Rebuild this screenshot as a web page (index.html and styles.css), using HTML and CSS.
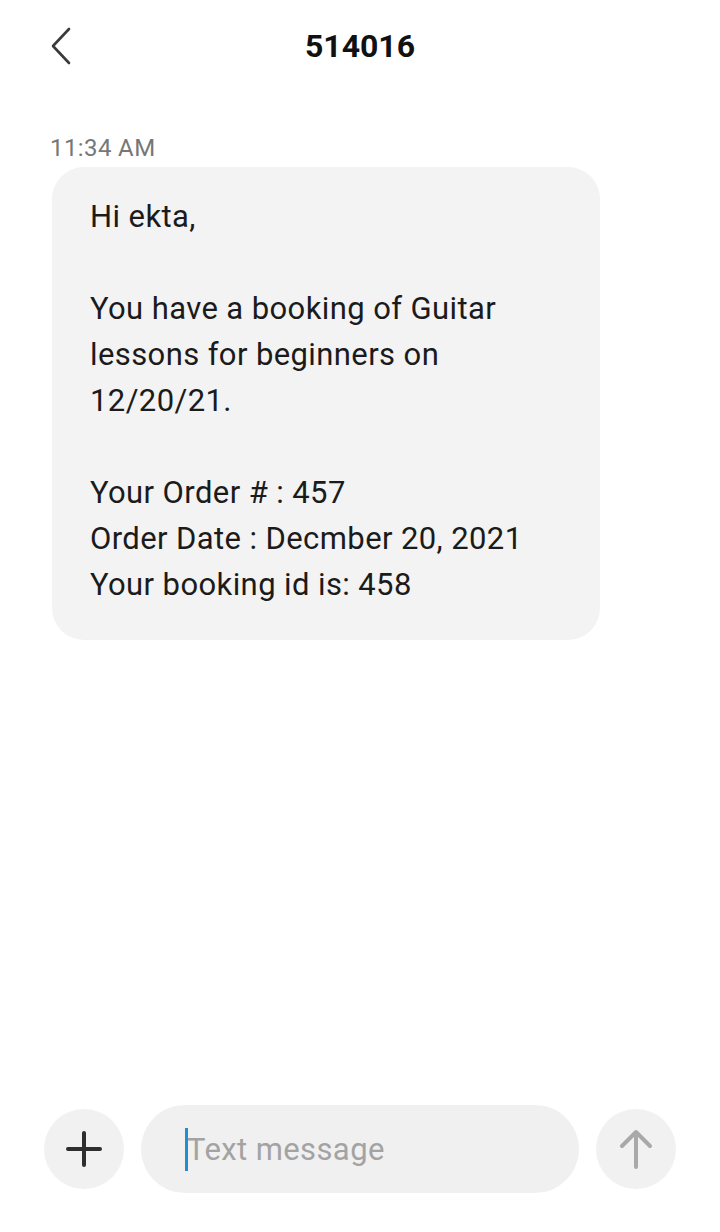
FILE: index.html
```
<!DOCTYPE html>
<html>
<head>
<meta charset="utf-8">
<link rel="stylesheet" href="styles.css">
</head>
<body>
<div class="screen">
  <header class="header">
    <div class="back">
      <svg width="22" height="38" viewBox="0 0 22 38"><path d="M19 2 L3 19 L19 36" fill="none" stroke="#3a3a3a" stroke-width="2.6" stroke-linecap="round" stroke-linejoin="round"/></svg>
    </div>
    <div class="title">514016</div>
    <div></div>
  </header>
  <main class="thread">
    <div class="time">11:34 AM</div>
    <div class="bubble">
      <p>Hi ekta,</p>
      <p>&nbsp;</p>
      <p>You have a booking of Guitar<br>lessons for beginners on<br>12/20/21.</p>
      <p>&nbsp;</p>
      <p>Your Order # : 457<br>Order Date : Decmber 20, 2021<br>Your booking id is: 458</p>
    </div>
  </main>
  <footer class="composer">
    <div class="round">
      <svg width="36" height="36" viewBox="0 0 36 36"><path d="M18 2 V34 M2 18 H34" stroke="#2e2e2e" stroke-width="4" stroke-linecap="round"/></svg>
    </div>
    <div class="field"><span class="cursor"></span><span class="placeholder">Text message</span></div>
    <div class="round">
      <svg width="36" height="40" viewBox="0 0 36 40"><path d="M18 38 V3 M4 17 L18 3 L32 17" fill="none" stroke="#a9a9a9" stroke-width="4" stroke-linecap="round" stroke-linejoin="round"/></svg>
    </div>
  </footer>
</div>
</body>
</html>
```
FILE: styles.css
```
html, body {
  margin: 0;
  padding: 0;
  background: #fff;
}
body {
  font-family: Roboto, "Noto Sans", sans-serif;
  color: #1b1b1b;
}
.screen {
  width: 720px;
  height: 1232px;
  display: flex;
  flex-direction: column;
}
.header {
  height: 92px;
  display: grid;
  grid-template-columns: 1fr auto 1fr;
  align-items: center;
}
.back {
  padding-left: 50px;
  display: flex;
  align-items: center;
}
.title {
  font-size: 32px;
  font-weight: 700;
  color: #111;
}
.thread {
  flex: 1;
  padding: 0 52px;
}
.time {
  margin-top: 42px;
  margin-left: -2px;
  font-size: 24px;
  letter-spacing: 0.4px;
  color: #777;
  line-height: 28px;
}
.bubble {
  margin-top: 5px;
  width: 548px;
  box-sizing: border-box;
  background: #f3f3f3;
  border-radius: 32px;
  padding: 27px 20px 32px 38px;
  font-size: 31px;
  letter-spacing: 0.4px;
  line-height: 46px;
}
.bubble p {
  margin: 0;
}
.composer {
  display: flex;
  align-items: center;
  gap: 17px;
  padding: 0 44px 39px 44px;
}
.round {
  width: 80px;
  height: 80px;
  border-radius: 50%;
  background: #f1f1f1;
  display: flex;
  align-items: center;
  justify-content: center;
  flex-shrink: 0;
}
.field {
  flex: 1;
  height: 88px;
  border-radius: 44px;
  background: #f0f0f0;
  display: flex;
  align-items: center;
  padding-left: 44px;
}
.cursor {
  width: 3px;
  height: 43px;
  background: #1e8fcf;
  margin-right: -1px;
}
.placeholder {
  font-size: 31px;
  letter-spacing: 0.4px;
  color: #a3a3a3;
}
```
